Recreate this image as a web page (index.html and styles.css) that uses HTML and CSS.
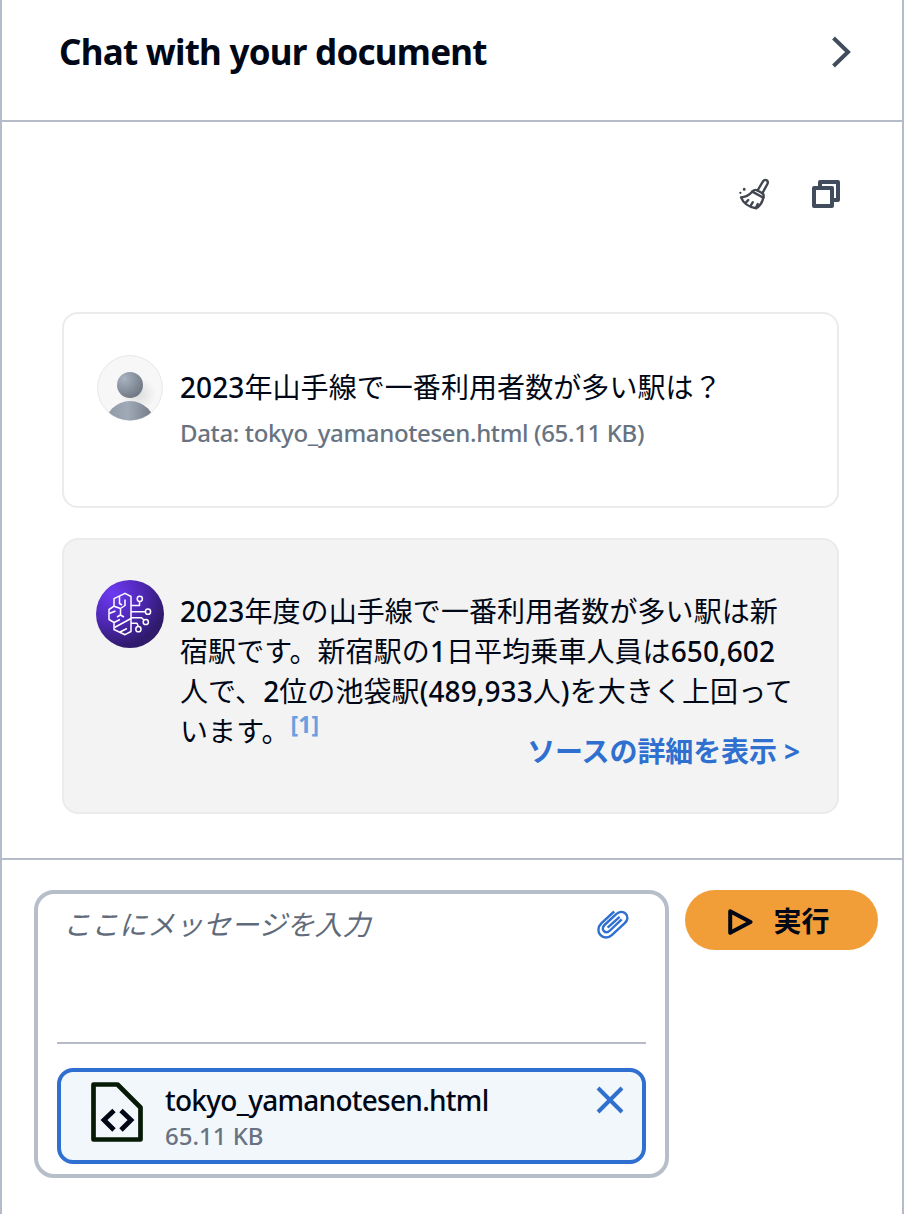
FILE: index.html
```html
<!DOCTYPE html>
<html lang="ja">
<head>
<meta charset="utf-8">
<meta name="viewport" content="width=device-width,initial-scale=1">
<title>Chat with your document</title>
<link rel="stylesheet" href="styles.css">
</head>
<body>

<div class="panel">
  <header class="panel-header">
    <h1><span class="title">Chat with your document</span></h1>
    <svg class="chevron" width="22" height="34" viewBox="0 0 22 34"><path d="M2.5 3 L17 17 L2.5 31" fill="none" stroke="#414d5c" stroke-width="4"/></svg>
  </header>

  <main class="conversation">
    <div class="toolbar">
      <svg width="32" height="32" viewBox="0 0 32 32" fill="none" stroke="#424650" stroke-width="2.4" stroke-linecap="round" stroke-linejoin="round">
        <path d="M19.5 12.5 L25 3.3 Q26.7 1.1 28.7 2.3 Q30.5 3.6 29.4 6 L24.3 15.3"/>
        <path d="M14.6 13.4 Q16.8 10.9 19.6 12.5 L24.3 15.2 Q26.4 16.7 25.3 19.3"/>
        <path d="M14.3 13.6 L25.4 19.7"/>
        <path d="M14.2 13.8 Q9.3 19.3 3 19.4 Q6.5 28.2 18.1 30.3 Q24 26.5 25.3 19.7"/>
        <path d="M8 24.4 L10.3 22 M12.8 27.5 L14.8 24.2 M17.9 29.8 L19.8 26"/>
        <circle cx="6.2" cy="11.2" r=".8" fill="#424650" stroke-width="1.4"/>
        <circle cx="2.4" cy="14.8" r=".6" fill="#424650" stroke-width="1.1"/>
      </svg>
      <svg width="28" height="28" viewBox="0 0 28 28" fill="none" stroke="#414d5c" stroke-width="4" stroke-linejoin="round">
        <path d="M8 7 V2 H26 V20 H21"/>
        <rect x="2" y="8" width="18" height="18"/>
      </svg>
    </div>

    <section class="message user">
      <svg class="avatar" width="68" height="68" viewBox="0 0 68 68">
        <defs>
          <radialGradient id="head" cx=".28" cy=".25" r=".85"><stop offset="0" stop-color="#a9b3c1"/><stop offset="1" stop-color="#6d7480"/></radialGradient>
          <linearGradient id="body"><stop offset="0" stop-color="#8f98a5"/><stop offset=".45" stop-color="#a0aab7"/><stop offset="1" stop-color="#6f7681"/></linearGradient>
          <radialGradient id="shade"><stop offset="0" stop-color="#dcdcdc"/><stop offset="1" stop-color="#f7f7f7"/></radialGradient>
          <clipPath id="round"><circle cx="34" cy="34" r="32.4"/></clipPath>
        </defs>
        <circle cx="34" cy="34" r="32.4" fill="#f7f7f7" stroke="#e6e8e8"/>
        <g clip-path="url(#round)">
          <ellipse cx="42" cy="40" rx="18" ry="16" fill="url(#shade)"/>
          <circle cx="34" cy="31" r="13" fill="url(#head)"/>
          <circle cx="34" cy="72" r="25" fill="url(#body)"/>
        </g>
      </svg>
      <div class="text">
        <p><b>2023</b>年山手線で一番利用者数が多い駅は？</p>
        <p class="source">Data: tokyo_yamanotesen.html (65.11 KB)</p>
      </div>
    </section>

    <section class="message bot">
      <svg class="avatar" width="68" height="68" viewBox="0 0 68 68">
        <defs>
          <radialGradient id="purple" cx=".25" cy=".2" r=".8"><stop offset="0" stop-color="#6d3af2"/><stop offset=".5" stop-color="#5129ba"/><stop offset="1" stop-color="#2f1a6b"/></radialGradient>
        </defs>
        <circle cx="34" cy="34" r="34" fill="url(#purple)"/>
        <g fill="none" stroke="#fff" stroke-width="1.5" stroke-linejoin="round">
          <path d="M35 16.5 L29 13.3 L18 18.7 V26.2 L13 29.5 V39.5 L18 42.5 V49.5 L29 54.7 L35 51.5 Z"/>
          <path d="M23.5 16.2 V23.5 L26 25 M29 19.5 V25.5 L24.5 28.5 L18 26.2 M24.5 28.5 V35 L21 37 M24.5 35 L28 37 M13.2 33.5 L19.5 31 M18 42.5 L24 39.5 M18.5 47.5 L35 38.5 M24 52 L31 48.5"/>
          <path d="M35 25.5 H43.5 V21.5 M35 31.7 H49 M35 37.7 H45.5 L48 40 M35 43.3 H41 L42.4 46.5"/>
          <circle cx="43.8" cy="18.8" r="2.6"/><circle cx="52" cy="31.7" r="2.6"/><circle cx="49.8" cy="42" r="2.6"/><circle cx="42.4" cy="49.2" r="2.6"/>
        </g>
      </svg>
      <div class="text">
        <p><b>2023</b>年度の山手線で一番利用者数が多い駅は新<br>宿駅です。新宿駅の<b>1</b>日平均乗車人員は<b>650,602</b><br>人で、<b>2</b>位の池袋駅<b>(489,933</b>人<b>)</b>を大きく上回って<br>います。<a class="ref">[1]</a></p>
        <a class="details">ソースの詳細を表示 &gt;</a>
      </div>
    </section>
  </main>

  <footer class="composer">
    <div class="input-box">
      <div class="prompt">
        <span class="placeholder">ここにメッセージを入力</span>
        <svg width="32" height="30" viewBox="0 0 32 30" fill="none" stroke="#2f6fd0" stroke-width="2.4">
          <path d="M17.2 1.5 L4.5 13.2 C.5 17.2 .6 22.2 3.5 25.2 C6.7 28.4 11.5 28.2 14.8 25.2 L27.5 13.4 C31 10.2 31.4 6.4 28.6 3.6 C26 1 22.2 1.5 19.2 4.1 L8 14.5 C5.4 17 5.2 19.4 6.9 21.1 C8.5 22.7 11 22.4 13 20.5 L24.7 9.4"/>
          <path d="M22.6 6.8 L10.6 17.6" />
        </svg>
      </div>
      <div class="file">
        <svg class="file-icon" width="52" height="60" viewBox="0 0 52 60" fill="none">
          <path d="M2.5 2.5 H26.5 L49.5 25.5 V57.5 H2.5 Z" stroke="#061a05" stroke-width="4.7" stroke-linejoin="round"/>
          <path d="M23 28.5 L13 38 L23 48 M30 28.5 L40 38 L30 48" stroke="#000716" stroke-width="4.8"/>
        </svg>
        <div class="file-info">
          <span class="name">tokyo_yamanotesen.html</span>
          <span class="size">65.11 KB</span>
        </div>
        <svg class="close" width="28" height="28" viewBox="0 0 28 28"><path d="M2 2 L26 26 M26 2 L2 26" stroke="#2f6fd0" stroke-width="4"/></svg>
      </div>
    </div>
    <button class="run">
      <svg width="25" height="26" viewBox="0 0 25 26"><path d="M2.2 2.2 L22.5 13 L2.2 23.8 Z" fill="none" stroke="#000716" stroke-width="4" stroke-linejoin="round"/></svg>
      <span>実行</span>
    </button>
  </footer>
</div>

</body>
</html>
```

FILE: styles.css
```css
*{box-sizing:border-box;}
body{margin:0;background:#fff;color:#000716;font-family:"Noto Sans","Noto Sans CJK JP",sans-serif;font-size:28px;line-height:40px;}
h1,p{margin:0;}
b{font-weight:500;}
svg{display:block;flex:none;}

.panel{width:904px;height:1214px;border:solid #b6bbc9;border-width:0 2px;display:flex;flex-direction:column;}
.panel-header{height:122px;padding:0 49px 16px 57px;border-bottom:2px solid #b6bbc9;display:flex;align-items:center;justify-content:space-between;}
h1{font-size:35px;line-height:44px;font-weight:700;white-space:nowrap;}
.title{letter-spacing:-.75px;}

.conversation{height:738px;padding:56px 62px 44px 60px;border-bottom:2px solid #b6bbc9;}
.toolbar{display:flex;justify-content:flex-end;align-items:center;gap:42px;height:32px;margin-bottom:102px;}

.message{width:777px;border:2px solid #e9ebed;border-radius:16px;padding:40px 30px 0 32px;display:flex;gap:16px;white-space:nowrap;}
.user{height:196px;margin-bottom:30px;}
.user .text{padding-top:13px;}
.bot{height:276px;background:#f3f3f3;}
.bot .text{padding-top:11px;}
.text p{letter-spacing:.08px;}
.text .source{font-size:24px;font-weight:500;line-height:32px;margin-top:10px;color:#687382;letter-spacing:-.35px;}
.ref{margin-left:1px;font-size:23px;font-weight:700;line-height:0;vertical-align:9px;color:#6a9fe0;}
.text{position:relative;flex:1;}
.details{position:absolute;right:7px;top:151px;font-weight:700;letter-spacing:-.1px;color:#2f6fd0;}

.composer{flex:1;padding:30px 24px 0 32px;display:flex;align-items:flex-start;gap:16px;}
.input-box{width:635px;height:288px;border:4px solid #b6bec9;border-radius:20px;padding:0 19px;}
.prompt{height:150px;border-bottom:2px solid #b6bbc9;margin-bottom:24px;padding:16px 17px 0 6px;display:flex;justify-content:space-between;align-items:flex-start;}
.placeholder{font-style:italic;color:#5f6b7a;line-height:28px;}
.file{height:96px;border:4px solid #2f6fd0;border-radius:16px;background:#f2f7fc;padding:10px 18px 0 30px;display:flex;align-items:flex-start;}
.file-info{flex:1;margin-left:22px;display:flex;flex-direction:column;font-weight:500;}
.name{line-height:36px;letter-spacing:-.73px;}
.size{font-size:24px;line-height:36px;color:#687382;}
.close{margin-top:4px;}
.run{width:193px;height:60px;border:0;border-radius:30px;background:#f29e38;color:#000716;font:700 28px/40px "Noto Sans CJK JP",sans-serif;display:flex;align-items:center;justify-content:center;gap:20px;padding:0 5px 0 0;}
.run svg{margin-top:4px;}
```
